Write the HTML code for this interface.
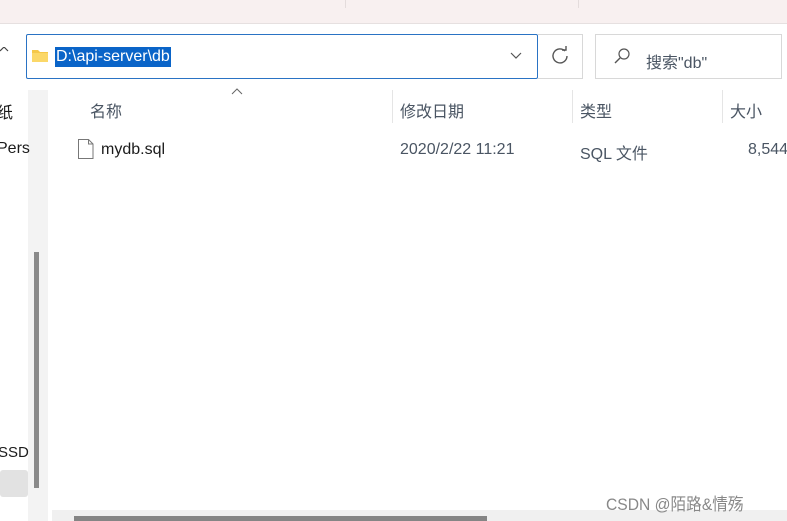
<!DOCTYPE html>
<html><head><style>
body{margin:0;width:787px;height:521px;background:#fff;position:relative;overflow:hidden;font-family:"Liberation Sans","Noto Sans CJK SC",sans-serif;color:#1b1b1b}
div,span{position:absolute}
.t{font-size:15px;white-space:nowrap}
.g{color:#4a5563}
</style></head><body>
<div style="left:0;top:0;width:787px;height:23px;background:#f8f0f0;border-bottom:1px solid #e6e0e0"></div>
<div style="left:345px;top:0;width:1px;height:8px;background:#e4dcdc"></div>
<div style="left:578px;top:0;width:1px;height:8px;background:#e4dcdc"></div>
<svg style="position:absolute;left:0;top:47px" width="10" height="14"><path d="M0 4 L4 0 L8 4" stroke="#444" fill="none" stroke-width="1.2"/></svg>
<div style="left:26px;top:34px;width:510px;height:43px;border:1px solid #2a73c4;border-radius:2px"></div>
<svg style="position:absolute;left:31px;top:48px" width="18" height="16"><path d="M1 2h6l2 2h8v10H1z" fill="#f5c84a"/><path d="M1 5h16v9H1z" fill="#fbd869"/></svg>
<div class="t" style="left:55px;top:47px;background:#0a64c8;color:#fff;padding:0 1px;line-height:20px;font-size:16px">D:\api-server\db</div>
<svg style="position:absolute;left:510px;top:52px" width="12" height="8"><path d="M1 1 L6 6 L11 1" stroke="#555" fill="none" stroke-width="1.2"/></svg>
<div style="left:538px;top:34px;width:44px;height:43px;border:1px solid #d8d8d8;border-left:none"></div>
<svg style="position:absolute;left:550px;top:46px" width="20" height="20"><path d="M15 5 A7 7 0 1 0 17 10" stroke="#555" fill="none" stroke-width="1.4"/><path d="M12 4 L16 4 L16 0" stroke="#555" fill="none" stroke-width="1.4"/></svg>
<div style="left:595px;top:34px;width:185px;height:43px;border:1px solid #d8d8d8"></div>
<svg style="position:absolute;left:612px;top:46px" width="20" height="20"><circle cx="12" cy="8" r="5" stroke="#555" fill="none" stroke-width="1.2"/><path d="M8 12 L3 17" stroke="#555" stroke-width="1.4"/></svg>
<div class="t g" style="left:646px;top:49px;font-size:16px">搜索"db"</div>
<div style="left:28px;top:90px;width:20px;height:431px;background:#f3f3f3"></div>
<div style="left:34px;top:252px;width:5px;height:236px;background:#8a8a8a"></div>
<div style="left:0;top:470px;width:28px;height:27px;background:#e2e2e2;border-radius:3px"></div>
<div class="t" style="left:-3px;top:99px;font-size:16px">纸</div>
<div class="t" style="left:-3px;top:140px;font-size:16px">Pers</div>
<div class="t" style="left:-2px;top:444px">SSD</div>
<svg style="position:absolute;left:231px;top:88px" width="14" height="8"><path d="M1 6 L6 1 L11 6" stroke="#666" fill="none" stroke-width="1"/></svg>
<div class="t g" style="left:90px;top:98px;font-size:16px">名称</div>
<div style="left:392px;top:90px;width:1px;height:33px;background:#e5e5e5"></div>
<div class="t g" style="left:400px;top:98px;font-size:16px">修改日期</div>
<div style="left:572px;top:90px;width:1px;height:33px;background:#e5e5e5"></div>
<div class="t g" style="left:580px;top:98px;font-size:16px">类型</div>
<div style="left:722px;top:90px;width:1px;height:33px;background:#e5e5e5"></div>
<div class="t g" style="left:730px;top:98px;font-size:16px">大小</div>
<svg style="position:absolute;left:77px;top:138px" width="18" height="22"><path d="M1.5 1.5h10l4.5 4.5v14.5H1.5z M11.5 1.5v4.5h4.5" stroke="#777" fill="#fff" stroke-width="1"/></svg>
<div class="t" style="left:101px;top:141px;font-size:16px">mydb.sql</div>
<div class="t g" style="left:400px;top:141px;font-size:16px">2020/2/22 11:21</div>
<div class="t g" style="left:580px;top:140px;font-size:16px">SQL 文件</div>
<div class="t g" style="left:748px;top:141px;font-size:16px">8,544</div>
<div style="left:52px;top:510px;width:735px;height:11px;background:#f0f0f0"></div>
<div style="left:74px;top:516px;width:413px;height:5px;background:#858585"></div>
<div style="left:606px;top:490px;font-size:17px;color:#888;white-space:nowrap;transform:scaleX(0.92);transform-origin:left">CSDN @陌路&amp;情殇</div>
</body></html>
